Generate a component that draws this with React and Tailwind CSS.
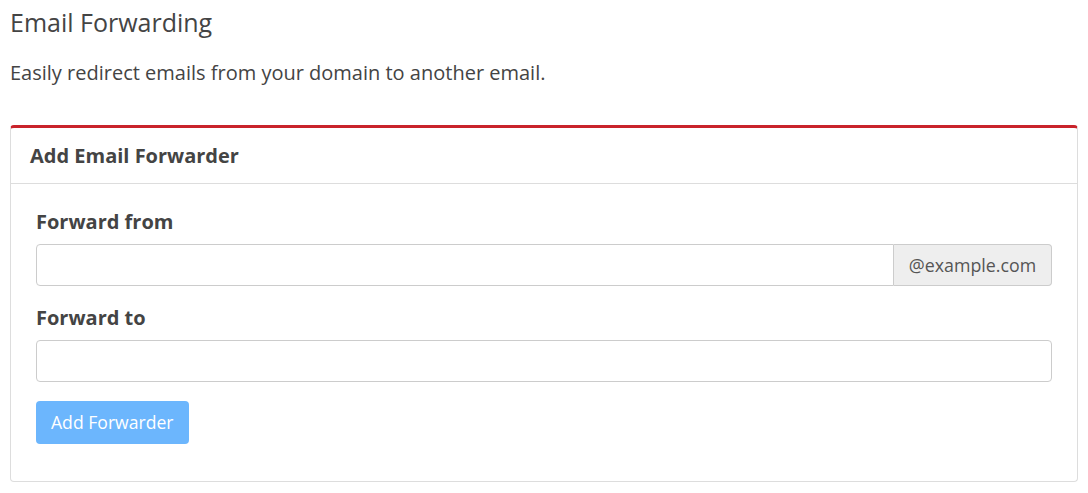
import React from 'react';

export default function App() {
  return (
    <div className="bg-white min-h-screen px-[10px] pt-[6px] text-[#444]" style={{ fontFamily: '"Open Sans", sans-serif' }}>
      <h1 className="text-[25px] leading-[32px] font-normal text-[#444]">Email Forwarding</h1>
      <p className="mt-[21px] text-[20px] leading-[28px] text-[#444]">Easily redirect emails from your domain to another email.</p>

      <div className="mt-[38px] bg-white border border-[#ddd] border-t-[3px] border-t-[#c9232b] rounded-[4px]">
        <div className="px-[19px] h-[56px] flex items-center border-b border-[#ddd]">
          <h3 className="text-[20px] font-bold text-[#444]">Add Email Forwarder</h3>
        </div>
        <div className="px-[25px] pt-[25px] pb-[37px]">
          <label className="block text-[20px] font-bold leading-[26px] text-[#444]">Forward from</label>
          <div className="mt-[9px] flex h-[42px]">
            <input type="text" className="flex-1 min-w-0 border border-[#ccc] rounded-l-[4px] px-3 text-[18px] outline-none" />
            <span className="w-[158px] flex items-center justify-center bg-[#eee] border border-l-0 border-[#ccc] rounded-r-[4px] text-[17.8px] text-[#555]">@example.com</span>
          </div>
          <label className="block mt-[19px] text-[20px] font-bold leading-[26px] text-[#444]">Forward to</label>
          <input type="text" className="mt-[9px] block w-full h-[42px] border border-[#ccc] rounded-[4px] px-3 text-[18px] outline-none" />
          <button className="mt-[19px] h-[43px] px-[15px] bg-[#6cb6fd] text-white text-[17.6px] rounded-[4px]">Add Forwarder</button>
        </div>
      </div>
    </div>
  );
}
